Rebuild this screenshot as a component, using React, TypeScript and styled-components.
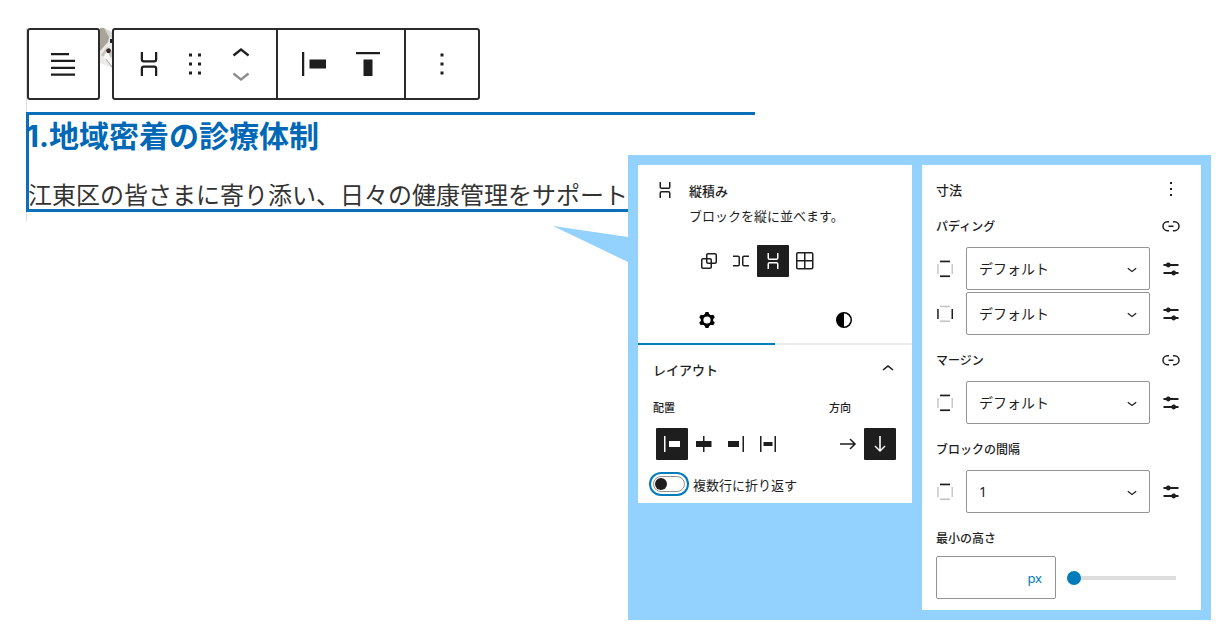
import React from "react";
import styled, { createGlobalStyle, css } from "styled-components";

const ink = "#1e1e1e";
const accent = "#007cba";
const outline = "#0a6fb7";
const sky = "#93d1ff";

const GlobalStyle = createGlobalStyle`
  *, *::before, *::after { box-sizing: border-box; }
  body {
    margin: 0;
    background: #fff;
    color: ${ink};
    font-family: "Noto Sans", "Noto Sans CJK JP", sans-serif;
    font-size: 13px;
  }
  button, input, select { font: inherit; color: inherit; margin: 0; }
  h2, h3, p { margin: 0; }
`;

/* ---------- icons ---------- */

const paths = {
  stack:
    "M17.5 4v5a2 2 0 0 1-2 2h-7a2 2 0 0 1-2-2V4H8v5a.5.5 0 0 0 .5.5h7A.5.5 0 0 0 16 9V4h1.5Zm0 16v-5a2 2 0 0 0-2-2h-7a2 2 0 0 0-2 2v5H8v-5a.5.5 0 0 1 .5-.5h7a.5.5 0 0 1 .5.5v5h1.5Z",
  row: "M4 6.5h5a2 2 0 0 1 2 2v7a2 2 0 0 1-2 2H4V16h5a.5.5 0 0 0 .5-.5v-7A.5.5 0 0 0 9 8H4V6.5Zm16 0h-5a2 2 0 0 0-2 2v7a2 2 0 0 0 2 2h5V16h-5a.5.5 0 0 1-.5-.5v-7A.5.5 0 0 1 15 8h5V6.5Z",
  group:
    "M18 4h-7c-1.1 0-2 .9-2 2v3H6c-1.1 0-2 .9-2 2v7c0 1.1.9 2 2 2h7c1.1 0 2-.9 2-2v-3h3c1.1 0 2-.9 2-2V6c0-1.1-.9-2-2-2zm-4.5 14c0 .3-.2.5-.5.5H6c-.3 0-.5-.2-.5-.5v-7c0-.3.2-.5.5-.5h3V13c0 1.1.9 2 2 2h2.5v3zm0-4.5H11c-.3 0-.5-.2-.5-.5v-2.5H13c.3 0 .5.2.5.5v2.5zm5-.5c0 .3-.2.5-.5.5h-3V11c0-1.1-.9-2-2-2h-2.5V6c0-.3.2-.5.5-.5h7c.3 0 .5.2.5.5v7z",
  grid: "m3 5c0-1.10457.89543-2 2-2h13.5c1.1046 0 2 .89543 2 2v13.5c0 1.1046-.8954 2-2 2h-13.5c-1.10457 0-2-.8954-2-2zm2-.5h6v6.5h-6.5v-6c0-.27614.22386-.5.5-.5zm-.5 8v6c0 .2761.22386.5.5.5h6v-6.5zm8 0v6.5h6c.2761 0 .5-.2239.5-.5v-6zm0-8v6.5h6.5v-6c0-.27614-.2239-.5-.5-.5z",
  lines: "M4 4.6h12v1.5H4zM4 9.2h16v1.5H4zM4 13.8h16v1.5H4zM4 18.3h16v1.5H4z",
  drag: "M8 7h2V5H8v2zm0 6h2v-2H8v2zm0 6h2v-2H8v2zm6-14v2h2V5h-2zm0 8h2v-2h-2v2zm0 6h2v-2h-2v2z",
  up: "M6.5 12.4L12 8l5.5 4.4-.9 1.2L12 10l-4.5 3.6-1-1.2z",
  down: "M17.5 11.6L12 16l-5.5-4.4.9-1.2L12 14l4.5-3.6 1 1.2z",
  left: "M9 9v6h11V9H9zM4 20h1.5V4H4v16z",
  center: "M12.5 15v5H11v-5H4V9h7V4h1.5v5h7v6h-7Z",
  right: "M4 15h11V9H4v6zM18.5 4v16H20V4h-1.5z",
  between: "M7.5 14h9v-4h-9zM4 20h1.5V4H4v16zM18.5 4v16H20V4h-1.5z",
  top: "M9 20h6V9H9v11zM4 4v1.5h16V4H4z",
  more: "M13 19h-2v-2h2v2zm0-6h-2v-2h2v2zm0-6h-2V5h2v2z",
  contrast:
    "M20 12a8 8 0 1 1-16 0 8 8 0 0 1 16 0Zm-1.5 0a6.5 6.5 0 0 1-6.5 6.5v-13a6.5 6.5 0 0 1 6.5 6.5Z",
  arrowRight: "m14.5 6.5-1 1 3.7 3.7H4v1.6h13.2l-3.7 3.7 1 1 5.6-5.5z",
  arrowDown: "m17.5 14.5-1-1-3.7 3.7V4h-1.6v13.2l-3.7-3.7-1 1 5.5 5.6z",
  link: "M10 17.389H8.444A5.194 5.194 0 1 1 8.444 7H10v1.5H8.444a3.694 3.694 0 0 0 0 7.389H10v1.5ZM14 7h1.556a5.194 5.194 0 0 1 0 10.39H14v-1.5h1.556a3.694 3.694 0 0 0 0-7.39H14V7Zm-4.5 6h5v-1.5h-5V13Z",
  sliders:
    "m19.5 7h-8c-.4-.8-1.2-1.4-2.2-1.4s-1.8.6-2.2 1.4h-2.6v2h2.6c.4.8 1.2 1.4 2.2 1.4s1.8-.6 2.2-1.4h8zm0 8h-2.6c-.4-.8-1.2-1.4-2.2-1.4s-1.8.6-2.2 1.4h-8v2h8c.4.8 1.2 1.4 2.2 1.4s1.8-.6 2.2-1.4h2.6z",
};

type IconName = keyof typeof paths;

const Svg = styled.svg`
  display: block;
  flex: none;
  fill: currentColor;
`;

const Icon = ({ name, size = 24 }: { name: IconName; size?: number }) => (
  <Svg viewBox="0 0 24 24" width={size} height={size} aria-hidden="true">
    <path d={paths[name]} fillRule="evenodd" clipRule="evenodd" />
  </Svg>
);

const CogIcon = () => (
  <Svg viewBox="0 0 24 24" width={24} height={24} aria-hidden="true">
    <circle cx="12" cy="12" r="4.9" fill="none" stroke="currentColor" strokeWidth="2.6" />
    {[0, 60, 120, 180, 240, 300].map((angle) => (
      <path key={angle} d="M10.5 3.9h3l1.1 3.4H9.4z" transform={`rotate(${angle} 12 12)`} />
    ))}
  </Svg>
);

type Sides = { top?: boolean; bottom?: boolean; left?: boolean; right?: boolean };

const SidesIcon = ({ top, bottom, left, right }: Sides) => {
  const shade = (on?: boolean) => (on ? 1 : 0.25);
  return (
    <Svg viewBox="0 0 24 24" width={24} height={24} aria-hidden="true">
      <path d="M7 3.6h10v1.7H7z" opacity={shade(top)} />
      <path d="M7 18.4h10v1.7H7z" opacity={shade(bottom)} />
      <path d="M4.2 7h1.5v10H4.2z" opacity={shade(left)} />
      <path d="M18.5 7H20v10h-1.5z" opacity={shade(right)} />
    </Svg>
  );
};

/* ---------- editor canvas ---------- */

const Stage = styled.main`
  display: grid;
  grid-template-columns: minmax(0, 1fr);
  align-items: start;
`;

const Canvas = styled.section`
  grid-area: 1 / 1;
  margin: 28px 0 0 26px;
  padding-bottom: 9px;
  background: linear-gradient(#dcdcdc, #dcdcdc) left / 1px 100% no-repeat;
`;

const Toolbar = styled.div`
  display: flex;
  padding-left: 1px;
  height: 72px;
`;

const ToolGroup = styled.div`
  display: flex;
  border: 2px solid #2b2b2b;
  border-radius: 3px;
  background: #fff;
`;

const ToolSegment = styled.div<{ $gap?: number; $pad?: string }>`
  display: flex;
  align-items: center;
  gap: ${(p) => p.$gap ?? 0}px;
  padding: ${(p) => p.$pad ?? "0 18px"};

  & + & {
    border-left: 2px solid #2b2b2b;
  }
`;

const ToolButton = styled.button<{ $half?: boolean; $dim?: boolean }>`
  display: flex;
  align-items: center;
  justify-content: center;
  width: 36px;
  height: ${(p) => (p.$half ? 21 : 36)}px;
  padding: 0;
  border: 0;
  background: none;
  color: ${(p) => (p.$dim ? "#8c8c8c" : ink)};
`;

const Mover = styled.div`
  display: flex;
  flex-direction: column;
`;

const Photo = styled.svg`
  display: block;
  width: 12px;
  height: 40px;
`;

const SelectedBlock = styled.article`
  width: calc(50% + 126px);
  margin-top: 12px;
  box-shadow: inset 3px 0 ${outline}, inset 0 3px ${outline}, inset 0 -3px ${outline};
  white-space: nowrap;
`;

const BlockHeading = styled.h2`
  padding-top: 2px;
  font: 700 30px/44px Inter, "Noto Sans CJK JP", sans-serif;
  color: #0068b7;
`;

const BlockText = styled.p`
  padding: 23px 0 3px 2px;
  font-size: 24px;
  line-height: 28px;
  color: #333;
`;

/* ---------- callout ---------- */

const Callout = styled.aside`
  grid-area: 1 / 1;
  justify-self: end;
  position: relative;
  display: grid;
  grid-template-columns: minmax(0, 274fr) minmax(0, 279fr);
  align-items: start;
  gap: 10px;
  width: calc(50% - 33px);
  min-width: 560px;
  margin: 155px 21px 18px 0;
  padding: 10px;
  background: ${sky};
`;

const Tail = styled.svg`
  position: absolute;
  top: 71px;
  right: 100%;
  width: 75px;
  height: 36px;
  fill: ${sky};
`;

const BlockPanel = styled.section`
  padding: 12px 0 7px;
  background: #fff;
`;

const BlockCard = styled.header`
  display: grid;
  grid-template-columns: 24px 1fr;
  grid-template-rows: 26px 24px;
  align-items: center;
  column-gap: 12px;
  padding-left: 15px;
`;

const PanelTitle = styled.h2`
  font-size: 13px;
  font-weight: 500;
`;

const CardText = styled.p`
  grid-column: 2;
`;

const ButtonRow = styled.div<{ $card?: boolean }>`
  display: flex;
  margin: ${(p) => (p.$card ? "18px 0 20px 55px" : "12px 0 0 3px")};
`;

const OptionButton = styled.button<{ $active?: boolean }>`
  display: grid;
  place-items: center;
  width: 32px;
  height: 32px;
  padding: 0;
  border: 0;
  border-radius: 1px;
  background: ${(p) => (p.$active ? ink : "transparent")};
  color: ${(p) => (p.$active ? "#fff" : ink)};
`;

const Tabs = styled.div`
  display: grid;
  grid-template-columns: 1fr 1fr;
`;

const Tab = styled.button<{ $active?: boolean }>`
  display: grid;
  place-items: center;
  height: 48px;
  padding: 0;
  border: 0;
  border-bottom: 2px solid ${(p) => (p.$active ? accent : "#ebebeb")};
  background: none;
  color: #000;
`;

const AccordionButton = styled.button`
  display: flex;
  align-items: center;
  justify-content: space-between;
  width: 100%;
  height: 48px;
  padding: 0 12px 0 15px;
  border: 0;
  background: none;
  font-weight: 500;
`;

const LayoutBody = styled.div`
  padding: 7px 16px 0 15px;
`;

const Split = styled.div`
  display: flex;
  justify-content: space-between;
`;

const SmallLabel = styled.div`
  font-size: 11px;
  font-weight: 500;
  line-height: 16px;
`;

const ToggleLabel = styled.label`
  display: flex;
  align-items: center;
  gap: 8px;
  height: 24px;
  margin-top: 12px;
`;

const Toggle = styled.input`
  appearance: none;
  width: 32px;
  height: 16px;
  padding: 1px;
  border: 1px solid #949494;
  border-radius: 8px;
  background: #fff;
  box-shadow: 0 0 0 2px #fff, 0 0 0 4px ${accent};

  &::before {
    content: "";
    display: block;
    width: 12px;
    height: 12px;
    border-radius: 50%;
    background: ${ink};
  }
`;

const SizePanel = styled.section`
  display: flex;
  flex-direction: column;
  gap: 13px;
  padding: 12px 18px 11px 11px;
  background: #fff;
`;

const Line = styled.div`
  display: flex;
  align-items: center;
  justify-content: space-between;
  height: 24px;
  padding-left: 3px;
`;

const Field = styled.div<{ $tight?: boolean }>`
  display: flex;
  flex-direction: column;
  gap: ${(p) => (p.$tight ? 6 : 9)}px;
`;

const fieldLabel = css`
  font-size: 12px;
  font-weight: 500;
`;

const FieldTitle = styled.span`
  ${fieldLabel}
`;

const FieldLabel = styled.label`
  ${fieldLabel}
`;

const Controls = styled.div`
  display: grid;
  grid-template-columns: 24px 1fr 24px;
  align-items: center;
  gap: 2px 9px;
`;

const SelectBox = styled.div`
  display: grid;
  grid-template-columns: 1fr 36px;
  align-items: center;

  svg {
    grid-area: 1 / 2;
    justify-self: center;
    pointer-events: none;
  }
`;

const Select = styled.select`
  grid-area: 1 / 1 / 2 / 3;
  appearance: none;
  width: 100%;
  height: 43px;
  padding: 0 36px 0 12px;
  border: 1px solid #949494;
  border-radius: 2px;
  background: #fff;
  font-size: 14px;
`;

const IconButton = styled.button`
  width: 24px;
  height: 24px;
  padding: 0;
  border: 0;
  background: none;
`;

const MinHeightRow = styled.div`
  display: flex;
  align-items: center;
  gap: 11px;
  padding: 0 7px 0 3px;
`;

const UnitBox = styled.div`
  display: flex;
  align-items: center;
  flex: none;
  width: 120px;
  height: 43px;
  padding-right: 13px;
  border: 1px solid #949494;
  border-radius: 2px;
  color: ${accent};
`;

const UnitInput = styled.input`
  flex: 1;
  min-width: 0;
  height: 100%;
  padding: 0 8px;
  border: 0;
  background: none;
`;

const Range = styled.input`
  appearance: none;
  flex: 1;
  min-width: 0;
  height: 14px;
  background: linear-gradient(#ddd, #ddd) center / 100% 4px no-repeat;
  border-radius: 2px;

  &::-webkit-slider-thumb {
    appearance: none;
    width: 14px;
    height: 14px;
    border-radius: 50%;
    background: ${accent};
  }
`;

/* ---------- parts ---------- */

const PresetSelect = ({ id, label, value, sides }: { id: string; label?: string; value: string; sides: Sides }) => (
  <>
    <SidesIcon {...sides} />
    <SelectBox>
      <Select id={id} aria-label={label} defaultValue={value}>
        <option>{value}</option>
      </Select>
      <Icon name="down" size={20} />
    </SelectBox>
    <IconButton type="button" aria-label="カスタムサイズ">
      <Icon name="sliders" />
    </IconButton>
  </>
);

const LinkButton = () => (
  <IconButton type="button" aria-label="リンク">
    <Icon name="link" />
  </IconButton>
);

const Options = ({ items, active }: { items: [IconName, string][]; active: IconName }) => (
  <>
    {items.map(([name, label]) => (
      <OptionButton key={name} type="button" aria-label={label} aria-pressed={name === active} $active={name === active}>
        <Icon name={name} />
      </OptionButton>
    ))}
  </>
);

const Tool = ({ name, label }: { name: IconName; label: string }) => (
  <ToolButton type="button" aria-label={label}>
    <Icon name={name} size={36} />
  </ToolButton>
);

export default function App() {
  return (
    <>
      <GlobalStyle />
      <Stage>
        <Canvas>
          <Toolbar>
            <ToolGroup>
              <ToolSegment $pad="0 17px 0 16px">
                <Tool name="lines" label="親ブロックを選択" />
              </ToolSegment>
            </ToolGroup>
            <Photo viewBox="0 0 12 40" aria-hidden="true">
              <path d="M0 0h5l7 5v35L0 35z" fill="#ebeae7" />
              <path d="M0 0h4l6 6-2 8-8 9z" fill="#aaa498" />
              <path d="M4 0l8 4v7L9 9z" fill="#d9d7d2" />
              <path d="M1 27l6-8 5 4v6l-5 3z" fill="#c5c1bc" />
              <path d="M3 29l4-6 5 9v6z" fill="#f7f7f5" />
              <path d="M6 22l3-2 2 2-1 3H7z" fill="#34282b" />
              <path d="M10 11h2v4h-2z" fill="#1c2030" />
              <path d="M6 31l6 8" stroke="#9aa0ac" fill="none" />
            </Photo>
            <ToolGroup>
              <ToolSegment $gap={10} $pad="0 17px">
                <Tool name="stack" label="縦積み" />
                <Tool name="drag" label="ドラッグ" />
                <Mover>
                  <ToolButton type="button" aria-label="上に移動" $half>
                    <Icon name="up" size={36} />
                  </ToolButton>
                  <ToolButton type="button" aria-label="下に移動" $half $dim>
                    <Icon name="down" size={36} />
                  </ToolButton>
                </Mover>
              </ToolSegment>
              <ToolSegment $gap={18}>
                <Tool name="left" label="左揃え" />
                <Tool name="top" label="上揃え" />
              </ToolSegment>
              <ToolSegment>
                <Tool name="more" label="オプション" />
              </ToolSegment>
            </ToolGroup>
          </Toolbar>
          <SelectedBlock>
            <BlockHeading>1.地域密着の診療体制</BlockHeading>
            <BlockText>江東区の皆さまに寄り添い、日々の健康管理をサポート</BlockText>
          </SelectedBlock>
        </Canvas>

        <Callout>
          <Tail viewBox="0 0 75 36" aria-hidden="true">
            <path d="M0 0l75 11v25z" />
          </Tail>

          <BlockPanel>
            <BlockCard>
              <Icon name="stack" />
              <PanelTitle>縦積み</PanelTitle>
              <CardText>ブロックを縦に並べます。</CardText>
            </BlockCard>
            <ButtonRow $card>
              <Options
                active="stack"
                items={[
                  ["group", "グループ"],
                  ["row", "横並び"],
                  ["stack", "縦積み"],
                  ["grid", "グリッド"],
                ]}
              />
            </ButtonRow>
            <Tabs role="tablist">
              <Tab type="button" role="tab" aria-selected="true" aria-label="設定" $active>
                <CogIcon />
              </Tab>
              <Tab type="button" role="tab" aria-selected="false" aria-label="スタイル">
                <Icon name="contrast" />
              </Tab>
            </Tabs>
            <AccordionButton type="button" aria-expanded="true">
              レイアウト
              <Icon name="up" />
            </AccordionButton>
            <LayoutBody>
              <Split>
                <div role="group" aria-labelledby="justify-label">
                  <SmallLabel id="justify-label">配置</SmallLabel>
                  <ButtonRow>
                    <Options
                      active="left"
                      items={[
                        ["left", "左揃え"],
                        ["center", "中央揃え"],
                        ["right", "右揃え"],
                        ["between", "均等配置"],
                      ]}
                    />
                  </ButtonRow>
                </div>
                <div role="group" aria-labelledby="direction-label">
                  <SmallLabel id="direction-label">方向</SmallLabel>
                  <ButtonRow>
                    <Options
                      active="arrowDown"
                      items={[
                        ["arrowRight", "横"],
                        ["arrowDown", "縦"],
                      ]}
                    />
                  </ButtonRow>
                </div>
              </Split>
              <ToggleLabel>
                <Toggle type="checkbox" role="switch" />
                複数行に折り返す
              </ToggleLabel>
            </LayoutBody>
          </BlockPanel>

          <SizePanel>
            <Line>
              <PanelTitle>寸法</PanelTitle>
              <IconButton type="button" aria-label="寸法オプション">
                <Icon name="more" />
              </IconButton>
            </Line>
            <Field>
              <Line>
                <FieldTitle>パディング</FieldTitle>
                <LinkButton />
              </Line>
              <Controls>
                <PresetSelect id="padding-y" label="上下のパディング" value="デフォルト" sides={{ top: true, bottom: true }} />
                <PresetSelect id="padding-x" label="左右のパディング" value="デフォルト" sides={{ left: true, right: true }} />
              </Controls>
            </Field>
            <Field>
              <Line>
                <FieldLabel htmlFor="margin-y">マージン</FieldLabel>
                <LinkButton />
              </Line>
              <Controls>
                <PresetSelect id="margin-y" value="デフォルト" sides={{ top: true, bottom: true }} />
              </Controls>
            </Field>
            <Field>
              <Line>
                <FieldLabel htmlFor="block-gap">ブロックの間隔</FieldLabel>
              </Line>
              <Controls>
                <PresetSelect id="block-gap" value="1" sides={{ top: true }} />
              </Controls>
            </Field>
            <Field $tight>
              <Line>
                <FieldLabel htmlFor="min-height">最小の高さ</FieldLabel>
              </Line>
              <MinHeightRow>
                <UnitBox>
                  <UnitInput id="min-height" type="text" inputMode="numeric" />
                  px
                </UnitBox>
                <Range type="range" min={0} max={100} defaultValue={0} aria-label="最小の高さ" />
              </MinHeightRow>
            </Field>
          </SizePanel>
        </Callout>
      </Stage>
    </>
  );
}
